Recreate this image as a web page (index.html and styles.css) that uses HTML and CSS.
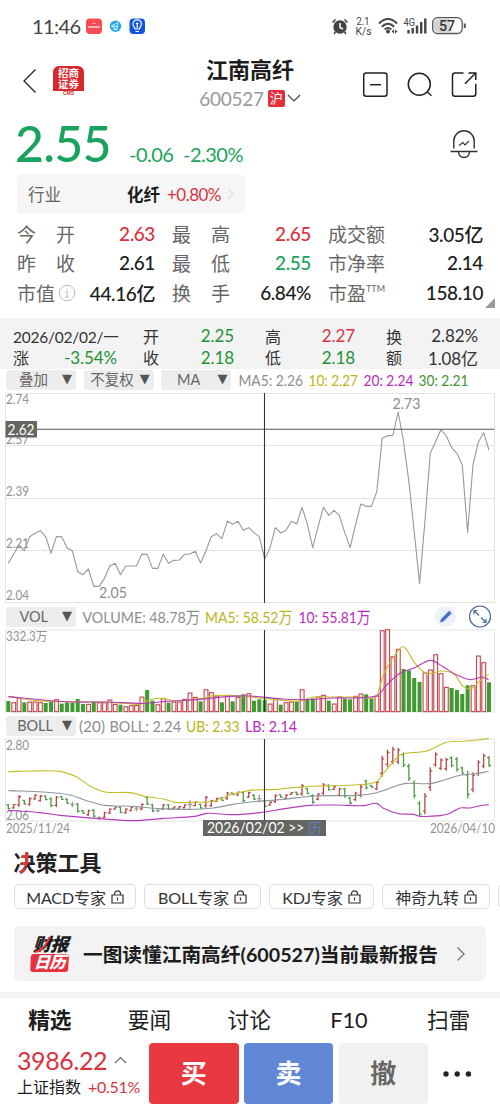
FILE: index.html
```html
<!DOCTYPE html>
<html lang="zh-CN">
<head>
<meta charset="utf-8">
<title>江南高纤 600527</title>
<link rel="stylesheet" href="styles.css">
</head>
<body>
<main class="app">
  <div class="status">
    <span class="clock">11:46</span>
    <svg class="status-apps" width="64" height="20" viewBox="84 17 64 20">
      <rect x="86" y="18.500" width="16" height="15.500" rx="4" fill="#fa4b55"/><path d="M88 27h12" stroke="#fff" stroke-width="1.300" stroke-dasharray="1.500 .4"/><path d="M92 23.500h4" stroke="#ff969b"/>
      <circle cx="115.500" cy="26.200" r="5.700" fill="#26a8e8"/><path d="M111.500 26l6.500-3.500-1 7-5.500-3.500 5.500.5M113 29l4 1" fill="none" stroke="#d8f4ff" stroke-width=".9"/>
      <rect x="129.500" y="18.500" width="15.500" height="15.500" rx="4" fill="#1055e0"/><path d="M135 29c0-2-2-2.500-2-5a4.200 4.200 0 0 1 8.400 0c0 2.500-2 3-2 5zM135.500 31.500h3.500M137.200 28v-4l-1.200-1m1.200 1l1.200-1" fill="none" stroke="#fff" stroke-width="1.200"/>
    </svg>
    <svg class="status-icons" width="140" height="24" viewBox="330 14 140 24">
      <circle cx="340" cy="27" r="6.700" fill="#444"/><path d="M332.500 22.500l3-3M347.500 22.500l-3-3M335.500 32l-1.500 2M344.500 32l1.500 2" stroke="#444" stroke-width="1.600"/><path d="M340 23v4.500l3 1.500" fill="none" stroke="#fff" stroke-width="1.500"/>
      <text x="356.500" y="25.300" textLength="13" class="tiny">2.1</text><text x="355.500" y="35" textLength="16" class="tiny">K/s</text>
      <path d="M379 23.500q9-9 18 0M381.800 26.700q6.200-6 12.400 0M384.700 29.500q3.300-3 6.600 0" fill="none" stroke="#444" stroke-width="1.900"/><circle cx="388" cy="31.500" r="2" fill="#444"/><path d="M391.500 31.500l2.500-2v4zM397.500 31.500l-2.500-2v4z" fill="#444"/>
      <text x="403.500" y="25.500" textLength="11.500" class="tiny">4G</text>
      <path d="M408.500 30v3.500M412.700 28v5.500M417 25.500v8M421.200 22v11.500M425.300 18.500v15" stroke="#444" stroke-width="2.400"/>
      <rect x="432.700" y="17.700" width="29.500" height="15.800" rx="4.800" fill="#fff" stroke="#555" stroke-width="1.300"/><path d="M438 19h12v13h-12a4 4 0 0 1-4-4v-5a4 4 0 0 1 4-4" fill="#d4d4d4"/><path d="M464.800 23.500v4.500" stroke="#555" stroke-width="2"/>
      <text x="439" y="31.300" textLength="16" class="battery">57</text>
    </svg>
  </div>

  <header class="header">
    <svg class="back" width="14" height="26" viewBox="0 0 14 26"><path d="M12.500 1.500L1 13l11.500 11.500" fill="none" stroke="#222" stroke-width="1.300"/></svg>
    <div class="broker"><b>招商<br>证券</b><i>CMS</i></div>
    <div class="title"><h1>江南高纤</h1><div class="code"><span>600527</span><b>沪</b><svg width="14" height="8" viewBox="0 0 14 8"><path d="M1 1l6 6 6-6" fill="none" stroke="#444" stroke-width="1.200"/></svg></div></div>
    <svg class="actions" width="116" height="28" viewBox="362 71 116 28" fill="none" stroke="#222" stroke-width="1.500">
      <rect x="363.700" y="73" width="23.300" height="23.300" rx="2.500"/><path d="M370 84.700h11"/>
      <circle cx="419.300" cy="84.300" r="11"/><path d="M427 91.700l4.500 4"/>
      <path d="M463.500 73h-8.500a2.500 2.500 0 0 0-2.500 2.500v18.300a2.500 2.500 0 0 0 2.500 2.500h18.300a2.500 2.500 0 0 0 2.500-2.500v-10M468.500 73h7.300v7M475.500 73.300l-10.500 10.500"/>
    </svg>
  </header>

  <section class="quote">
    <div class="price green"><strong>2.55</strong><span>-0.06</span><span>-2.30%</span>
      <svg class="bell" width="28" height="30" viewBox="0 0 28 30" fill="none" stroke="#333" stroke-width="1.400"><path d="M3.800 18.500v-7.500a10.200 10.200 0 0 1 20.400 0v7.500M.5 21.500h27M8.500 22a5.500 5.500 0 0 0 11 0"/><path d="M9 15.500l4-3 2 2.500 4-4" stroke-width="1.100"/></svg>
    </div>
    <div class="industry"><span>行业</span><b>化纤</b><em class="red">+0.80%</em><svg width="7" height="12" viewBox="0 0 7 12"><path d="M1 1l5 5-5 5" fill="none" stroke="#ddd" stroke-width="1.200"/></svg></div>
  </section>

  <section class="stats">
    <label><i>今</i><i>开</i></label><b class="red">2.63</b><label><i>最</i><i>高</i></label><b class="red">2.65</b><label>成交额</label><b>3.05亿</b>
    <label><i>昨</i><i>收</i></label><b>2.61</b><label><i>最</i><i>低</i></label><b class="green">2.55</b><label>市净率</label><b>2.14</b>
    <label>市值<svg width="18" height="18" viewBox="0 0 18 18" fill="none" stroke="#bbb"><circle cx="9" cy="9" r="7.800"/><path d="M7.500 7.500H9V13M7 13h4M9 4.200v1.500"/></svg></label><b>44.16亿</b><label><i>换</i><i>手</i></label><b>6.84%</b><label class="pe">市盈<sup>TTM</sup></label><b>158.10</b>
    <svg class="corner" width="10" height="10"><path d="M10 0v10H0z" fill="#999"/></svg>
  </section>

  <section class="day">
    <span class="date">2026/02/02/一</span><span class="k1">开</span><b class="dgreen">2.25</b><span class="k2">高</span><b class="red">2.27</b><span class="k2">换</span><b>2.82%</b>
    <span>涨</span><b class="dgreen">-3.54%</b><span class="k1">收</span><b class="dgreen">2.18</b><span class="k2">低</span><b class="dgreen">2.18</b><span class="k2">额</span><b>1.08亿</b>
  </section>

  <div class="toolbar top"><span class="pick">叠加<i>▼</i></span><span class="pick adj">不复权<i>▼</i></span><span class="pick ma">MA<i>▼</i></span>
    <svg class="legend ma-legend" width="240" height="20" viewBox="237 370 240 20"><text x="238.500" y="385.800" textLength="64.500">MA5: 2.26</text><text x="308.500" y="385.800" textLength="49.500" class="ub">10: 2.27</text><text x="363.500" y="385.800" textLength="50" class="lb">20: 2.24</text><text x="418.500" y="385.800" textLength="50" class="dg">30: 2.21</text></svg>
  </div>
  <svg id="price" class="chart" width="500" height="214" viewBox="0 391 500 214"></svg>
  <div class="toolbar"><span class="pick">VOL<i>▼</i></span>
    <svg class="legend vol" width="415" height="24" viewBox="80 605 415 24"><text x="82.500" y="622.500" textLength="117.500">VOLUME: 48.78万</text><text x="205" y="622.500" textLength="87.500" class="ub">MA5: 58.52万</text><text x="298.500" y="622.500" textLength="72" class="lb">10: 55.81万</text>
      <circle cx="445.500" cy="616.500" r="10.500" fill="#edf2fa"/><path d="M440 622.500l1-3.500 8.200-8.200 2.500 2.500-8.200 8.200z" fill="#4c6fc8"/><circle cx="480" cy="616.500" r="10.500" fill="none" stroke="#45698f" stroke-width="1.200"/><path d="M474 614v-3.500h3.500M474 610.500l5 5M486 619v3.500h-3.500M486 622.500l-5-5" fill="none" stroke="#45698f" stroke-width="1.200"/></svg>
  </div>
  <svg id="volume" class="chart" width="500" height="86" viewBox="0 629 500 86"></svg>
  <div class="toolbar boll"><span class="pick">BOLL<i>▼</i></span>
    <svg class="legend" width="300" height="20" viewBox="78 716 300 20"><text x="79" y="731.500" textLength="26">(20)</text><text x="109.500" y="731.500" textLength="71.500">BOLL: 2.24</text><text x="186" y="731.500" textLength="53.500" class="ub">UB: 2.33</text><text x="245" y="731.500" textLength="52" class="lb">LB: 2.14</text></svg>
  </div>
  <svg id="bands" class="chart" width="500" height="102" viewBox="0 737 500 102"></svg>

  <section class="tools">
    <svg class="tools-title" width="90" height="26" viewBox="14 850 90 26"><defs><clipPath id="accent"><path d="M21.500 850h7v13l-3 5-3 8h-6l2-8 3-4z"/></clipPath></defs><text x="13.500" y="870.500" textLength="88">决策工具</text><text x="13.500" y="870.500" textLength="88" clip-path="url(#accent)" class="accent" aria-hidden="true">决策工具</text></svg>
    <div class="chips">
      <span class="c1">MACD专家<svg class="lock"><use href="#lock"/></svg></span><span class="c2">BOLL专家<svg class="lock"><use href="#lock"/></svg></span><span class="c3">KDJ专家<svg class="lock"><use href="#lock"/></svg></span><span class="c4">神奇九转<svg class="lock"><use href="#lock"/></svg></span><span class="c5"></span>
    </div>
    <svg class="symbols"><symbol id="lock" viewBox="0 0 13 14"><path d="M1 5h11v8H1zM3.500 5V3.800a3 3 0 0 1 6 0V5M6.500 7.500v3" fill="none" stroke="#333" stroke-width="1.200"/></symbol></svg>
    <div class="banner"><div class="report"><b>财报</b><strong>日历</strong><svg width="20" height="20" viewBox="0 0 20 20"><path d="M1 16c5-1 9-5 11-9l3-6" fill="none" stroke="#e8323c" stroke-width="2.200"/></svg></div><p>一图读懂江南高纤(600527)当前最新报告</p><svg width="10" height="16" viewBox="0 0 10 16"><path d="M1.500 1.500L8 8l-6.500 6.500" fill="none" stroke="#777" stroke-width="1.400"/></svg></div>
  </section>

  <nav class="tabs"><b>精选</b><span>要闻</span><span>讨论</span><span>F10</span><span>扫雷</span></nav>
  <footer class="trade">
    <div class="index"><div class="points red">3986.22<svg width="13" height="8" viewBox="0 0 13 8"><path d="M1 7l5.500-5.500L12 7" fill="none" stroke="#666" stroke-width="1.100"/></svg></div><div class="index-name">上证指数<em class="red">+0.51%</em></div></div>
    <div class="btn buy">买</div><div class="btn sell">卖</div><div class="btn cancel">撤</div>
    <svg class="more" width="30" height="8" viewBox="0 0 30 8"><circle cx="4" cy="4" r="2.700"/><circle cx="15.200" cy="4" r="2.700"/><circle cx="26.400" cy="4" r="2.700"/></svg>
  </footer>
</main>
<script src="charts.js"></script>
</body>
</html>
```
FILE: charts.js
```js
const X0 = 8.3, STEP = 5.341;
const px = i => X0 + STEP * i;
const RED = '#c84a50', GREEN = '#3f9b2f', GRAY = '#999';

const line = (x1, y1, x2, y2, color = '#e4e4e4', w = 1) =>
  `<path d="M${x1} ${y1}L${x2} ${y2}" stroke="${color}" stroke-width="${w}" fill="none"/>`;
const poly = (pts, color) =>
  `<polyline points="${pts.map(p => p.join(',')).join(' ')}" fill="none" stroke="${color}" stroke-width="1.1" stroke-linejoin="round"/>`;
const label = (x, y, len, s, cls = 'axis') =>
  `<text x="${x}" y="${y}" textLength="${len}" class="${cls}">${s}</text>`;
const frame = (y, h) =>
  `<rect x="5.5" y="${y}" width="489" height="${h}" fill="none" stroke="#e4e4e4"/>`;

// smooth overlay through sparse control points
function curve(pts, color) {
  let d = `M${pts[0]}`;
  for (let i = 0; i < pts.length - 1; i++) {
    const a = pts[Math.max(0, i - 1)], b = pts[i], c = pts[i + 1], e = pts[Math.min(pts.length - 1, i + 2)];
    const t = (c[0] - b[0]) / 3;
    d += `C${b[0] + t} ${b[1] + (c[1] - a[1]) / (c[0] - a[0]) * t} ${c[0] - t} ${c[1] - (e[1] - b[1]) / (e[0] - b[0]) * t} ${c[0]} ${c[1]}`;
  }
  return `<path d="${d}" fill="none" stroke="${color}" stroke-width="1.1"/>`;
}

// closing price
const close = [535,507,480,497,455,445,437,455,505,455,455,488,498,560,569,552,604,604,580,543,535,569,543,543,543,508,508,550,550,508,535,526,525,508,507,499,534,498,455,446,461,409,418,409,436,428,443,455,522,488,428,444,436,409,417,367,418,488,425,367,391,376,392,443,488,420,357,364,364,320,160,152,151,81,170,290,440,596,410,205,170,134,152,188,205,240,442,240,172,143,195];
document.getElementById('price').innerHTML =
  frame(393.5, 209) + [445.5, 498.5, 550.5].map(y => line(6, y, 494, y)).join('') +
  label(6, 404, 23, '2.74') + label(6, 443.5, 23, '2.57') + label(6, 496, 23, '2.39') + label(6, 548, 23, '2.21') + label(6, 600, 23, '2.04') +
  poly(close.map((v, i) => [px(i), 385 + v / 3]), GRAY) +
  label(99, 598, 28, '2.05', 'peak') + label(392.5, 409, 28, '2.73', 'peak') +
  line(6, 429.3, 494.5, 429.3, '#54544e', 1.1) + line(264.5, 393, 264.5, 603, '#333', 1.1) +
  '<rect x="5.5" y="421" width="31.5" height="16.5" fill="#666660"/>' + label(7.5, 434.8, 27, '2.62', 'badge');

// volume
const vol = 'g288 r292 r278 g292 r290 r290 r292 g294 g290 r283 g296 g292 g293 g282 g297 r297 g290 r292 r292 r284 r297 g299 r304 r301 r300 r275 g255 g287 r298 r280 g293 r290 r290 r282 r263 r276 g289 r253 r262 r272 g292 r271 g289 r276 g268 r265 g287 g283 g285 r296 r280 g299 r292 r290 g290 r253 g282 g280 r275 r270 g287 r296 r275 g281 g283 r273 r266 g268 g282 r272 r76 r73 r154 r132 g192 g196 g219 g231 r203 r194 r148 r205 r246 g249 g255 g267 g241 r241 r152 r172 g232'.split(' ');
const toXY = (ox, oy) => ([x, y]) => [ox + x / 3, oy + y / 3];
document.getElementById('volume').innerHTML =
  frame(630, 82) + label(6, 640.5, 41.5, '332.3万') +
  vol.map((v, i) => {
    const y = 605 + (+v.slice(1)) / 3, h = 712 - y;
    return v[0] === 'g'
      ? `<rect x="${px(i) - 2}" y="${y}" width="4" height="${h}" fill="${GREEN}"/>`
      : `<rect x="${px(i) - 1.8}" y="${y + .4}" width="3.8" height="${h - .8}" fill="#fff" stroke="${RED}" stroke-width="1.15"/>`;
  }).join('') +
  curve([[25,274],[105,286],[185,290],[300,291],[390,296],[420,298],[450,284],[490,280],[525,288],[570,284],[610,279],[640,272],[690,271],[750,276],[850,286],[900,288],[940,276],[1000,276],[1080,276],[1130,273],[1150,210],[1185,150],[1211,125],[1245,175],[1280,206],[1325,198],[1362,207],[1390,245],[1418,249],[1440,228],[1466,208]].map(toXY(0, 605)), '#c2be27') +
  curve([[25,275],[130,285],[220,291],[320,291],[430,295],[500,289],[600,283],[690,274],[750,273],[850,282],[910,284],[1000,279],[1130,273],[1160,240],[1200,205],[1240,190],[1292,166],[1330,186],[1370,210],[1410,224],[1450,216],[1466,225]].map(toXY(0, 605)), '#b63bbc') +
  line(264.5, 630, 264.5, 712, '#333', 1.1);

// bollinger bands with high-low bars
const bars = 'g207-223 r207-221 r180-215 g194-209 r187-212 r178-194 r180-200 g181-196 g187-216 r182-216 g183-195 g190-207 n200-217 g203-233 g225-236 r224-242 g222-247 n242-255 r230-250 r220-237 r215-224 g214-235 r220-236 r215-229 n214-229 r205-225 g183-211 g206-231 n222-232 r207-225 g207-225 r215-221 r214-221 r208-220 n196-221 r199-214 g206-221 r182-218 r194-215 r188-201 g187-198 r171-194 g173-180 r170-182 g168-202 r170-189 g178-195 n180-202 g195-217 r200-212 r178-204 g178-188 r178-193 r172-179 g170-180 r147-182 g158-178 g178-206 r174-196 r144-180 g148-167 r153-165 r158-184 g158-188 g186-208 r170-198 r150-187 g134-163 g150-158 r138-166 r62-125 r45-95 r35-88 r38-87 g52-96 g86-138 g136-190 g198-244 r174-238 r97-168 r52-95 r70-105 r68-107 g64-97 g66-110 g95-118 g108-190 r112-172 r75-123 r56-100 g63-96'.split(' ');
document.getElementById('bands').innerHTML =
  frame(739, 82) + label(6, 750, 23, '2.80') + label(6, 820, 23, '2.06') +
  bars.map((s, i) => {
    const [hi, lo] = s.slice(1).split('-').map(v => 735 + v / 3), x = px(i);
    const c = { r: '#b94746', g: '#4c9b42', n: '#999' }[s[0]], m = (lo - hi) * .15;
    const [o, e] = s[0] === 'r' ? [lo - m, hi + m] : s[0] === 'g' ? [hi + m, lo - m] : [(hi + lo) / 2, (hi + lo) / 2];
    return `<path d="M${x} ${hi}V${lo}M${x - 2} ${o}H${x}M${x} ${e}H${x + 2}" stroke="${c}" stroke-width="1.3" fill="none"/>`;
  }).join('') +
  curve([[25,110],[100,108],[180,109],[230,126],[270,153],[315,171],[390,173],[440,185],[490,192],[525,202],[570,202],[640,199],[690,180],[750,166],[830,163],[890,157],[960,153],[1060,150],[1130,140],[1150,115],[1200,60],[1225,54],[1280,48],[1340,22],[1400,18],[1466,11]].map(toXY(0, 735)), '#c2be27') +
  curve([[25,167],[130,171],[210,180],[260,197],[315,211],[400,214],[480,221],[560,223],[640,219],[700,208],[750,201],[850,193],[940,183],[1070,181],[1130,173],[1190,152],[1220,145],[1290,146],[1330,136],[1380,121],[1430,116],[1466,109]].map(toXY(0, 735)), '#8f969b') +
  curve([[25,226],[120,233],[180,241],[300,251],[400,257],[490,250],[585,244],[620,235],[700,239],[780,233],[860,220],[930,211],[1010,210],[1090,212],[1130,205],[1150,220],[1195,236],[1240,238],[1260,244],[1320,242],[1350,235],[1380,219],[1410,219],[1440,212],[1466,209]].map(toXY(0, 735)), '#b63bbc') +
  line(264.5, 739, 264.5, 821, '#333', 1.1) +
  label(6, 832.5, 64, '2025/11/24') + label(430, 832.5, 65, '2026/04/10') +
  '<rect x="203" y="820" width="123" height="16" fill="#666660"/>' +
  label(207, 832.8, 97.5, '2026/02/02 &gt;&gt;', 'cursor') + label(307.5, 833.5, 14, '历', 'cursor blue');

// condense the glyphs together with their spacing
document.querySelectorAll('text[textLength]').forEach(t => t.setAttribute('lengthAdjust', 'spacingAndGlyphs'));
```
FILE: styles.css
```css
* { box-sizing: border-box; }
body, h1, p { margin: 0; }
i, em { font-style: normal; }
body { width: 500px; height: 1113px; overflow: hidden; background: #fff; color: #1c1c1c; font-family: Lato, "Noto Sans CJK SC", sans-serif; font-size: 16px; }
svg { display: block; flex: none; }
.app { width: 500px; }
.red { color: #d7343f; }
.green { color: #1aa35c; }
.dgreen { color: #219334; }

.status { height: 52px; display: flex; align-items: flex-start; padding-top: 14px; }
.clock { width: 84px; padding-left: 32px; font-size: 20px; line-height: 25px; letter-spacing: -.6px; color: #444; white-space: nowrap; }
.status-apps { margin-top: 3px; }
.status-icons { margin-left: 182px; }
.tiny { font: 10px Roboto, sans-serif; fill: #444; }
.battery { font: 500 14px Roboto, sans-serif; fill: #333; }

.header { height: 64px; display: flex; padding-left: 23px; }
.back { margin-top: 16px; }
.broker { width: 31px; height: 31px; margin: 14px 0 0 16px; text-align: center; }
.broker b { display: block; height: 25px; border-radius: 6px 6px 0 0; background: #d9272e; color: #fff; font-size: 10.5px; line-height: 11px; padding-top: 1.5px; }
.broker i { display: block; font: bold 5px/5px "Liberation Sans", sans-serif; color: #d9272e; }
.title { width: 144px; margin-left: 94px; display: flex; flex-direction: column; align-items: center; padding-top: 3px; }
.title h1 { font-size: 22px; line-height: 30px; }
.code { display: flex; align-items: center; margin-top: 2px; height: 22px; color: #999; font-size: 19px; }
.code span { letter-spacing: -.3px; }
.code b { margin: 0 2px 0 4px; width: 17px; height: 17px; border-radius: 2px; background: #e52d3b; color: #fff; font-size: 13px; font-weight: 400; line-height: 16px; text-align: center; }
.actions { margin: 19px 0 0 40px; }

.quote { height: 103px; padding: 0 17px; }
.price { height: 58px; display: flex; align-items: baseline; }
.price strong { width: 114px; font-size: 50px; line-height: 55px; font-weight: 500; letter-spacing: -.8px; margin-left: -2px; }
.price span { font-size: 20px; letter-spacing: -.5px; }
.price strong + span { width: 54px; }
.bell { margin-left: auto; align-self: flex-start; margin-top: 14px; margin-right: 5px; }
.industry { width: 228px; height: 40px; border-radius: 5px; background: #f6f6f6; display: flex; align-items: center; padding: 0 11px; font-size: 16.5px; }
.industry span { color: #666; }
.industry b { margin-left: auto; }
.industry em { margin: 0 6px 0 7px; font-size: 17px; letter-spacing: -.5px; }

.stats { height: 99px; padding: 0 17px; display: grid; grid-template-columns: 58px 80px 58px 81px 58px 97px; grid-auto-rows: 29.3px; align-items: center; position: relative; font-size: 19px; }
.stats label { display: flex; justify-content: space-between; color: #666; white-space: nowrap; }
.stats label:nth-of-type(3n+2) { margin-left: 17px; margin-right: -17px; }
.stats label:nth-of-type(3n) { margin-left: 34px; margin-right: -34px; }
.stats b { text-align: right; font-weight: 500; letter-spacing: -.4px; white-space: nowrap; }
.stats > b:nth-of-type(3n+2) { margin-right: -17px; }
.stats > b:nth-of-type(3n) { margin-right: -34px; }
.stats > label svg { margin: 5px 0 0 3px; }
.stats sup { font-size: 9px; line-height: 12px; margin-top: 4px; }
.stats .pe { justify-content: flex-start; }
.corner { position: absolute; right: 5px; top: 79px; }

.day { height: 51px; background: #f3f3f3; padding: 7px 22px 0 13px; display: grid; grid-template-columns: 28px 76px 42px 75px 47px 74px 49px 74px; grid-auto-rows: 21.5px; align-items: center; font-size: 16px; color: #333; }
.day .date { grid-column: span 2; font-size: 15.5px; letter-spacing: -.25px; white-space: nowrap; }
.day b { font-weight: 400; font-size: 17px; text-align: right; letter-spacing: -.1px; white-space: nowrap; }
.day .k1 { padding-left: 26px; }
.day .k2 { padding-left: 31px; }

.toolbar { height: 24px; padding: 2px 0 2px 6px; display: flex; gap: 7.7px; align-items: flex-start; }
.toolbar.top { height: 22px; padding-top: 1px; padding-bottom: 0; }
.toolbar.boll { height: 22px; padding-top: 1px; gap: 2px; }
.pick { width: 70px; height: 20px; border-radius: 3px; background: #ededed; color: #666; font-size: 14.5px; line-height: 19px; display: flex; justify-content: flex-end; flex: none; white-space: nowrap; }
.pick i { width: 18px; margin-left: 10px; text-align: center; font: 13px/17px "DejaVu Sans", sans-serif; color: #555; }
.pick.adj i { margin-left: 2px; }
.pick.ma i { margin-left: 13px; }
.boll .pick i { margin-left: 5px; }
.legend text { font-size: 16px; fill: #8d8d8d; }
.legend .ub { fill: #b9b519; }
.legend .lb { fill: #b62bbd; }
.legend .dg { fill: #3f9332; }
.ma-legend { margin-left: -2px; }
.vol { margin: -2px 0 0 -3.7px; }
.axis { font-size: 12.5px; fill: #929292; }
.peak { font-size: 14.5px; fill: #8d8d8d; }
.badge { font-size: 15px; fill: #fff; }
.cursor { font-size: 14.5px; fill: #fff; }
.cursor.blue { fill: #5b7fc8; }

.tools { height: 153px; padding-top: 11px; overflow: hidden; }
.tools-title { margin-left: 14px; }
.tools-title text { font-size: 22px; font-weight: 700; fill: #222; }
.tools-title .accent { fill: #e8323c; }
.chips { display: flex; padding-left: 14px; gap: 8px; margin-top: 8px; }
.chips > span { height: 25px; flex: none; border: 1px solid #ddd; border-radius: 5px; display: flex; align-items: center; justify-content: center; gap: 5px; font-size: 16px; letter-spacing: -.1px; color: #333; white-space: nowrap; }
.chips .c1 { width: 122px; }
.chips .c2 { width: 117px; }
.chips .c3 { width: 105px; }
.chips .c4 { width: 108px; }
.chips .c5 { width: 20px; }
.lock { width: 13px; height: 14px; }
.symbols { width: 0; height: 0; }
.banner { height: 55px; margin: 17px 14px 0; border-radius: 6px; background: #f3f3f3; display: flex; align-items: center; padding: 0 20px 0 17px; }
.report { position: relative; width: 38px; height: 36px; font-style: italic; text-align: center; transform: skewX(-3deg); }
.report b, .report strong { display: block; height: 18px; font-size: 18px; line-height: 17px; font-weight: 900; letter-spacing: -.5px; }
.report strong { background: #e8323c; color: #fff; border-radius: 3px; font-size: 16px; line-height: 16px; }
.report svg { position: absolute; left: 3px; top: 0; }
.banner p { margin-left: 14px; margin-right: auto; font-size: 19.7px; font-weight: 700; white-space: nowrap; }

.tabs { height: 46px; border-top: 6px solid #f3f3f3; display: grid; grid-template-columns: repeat(5, 99.7px); text-align: center; font-size: 21.7px; line-height: 44px; }
.trade { height: 75px; display: flex; align-items: flex-start; padding: 5px 0 0 17px; }
.index { width: 132px; }
.points { font-size: 25px; letter-spacing: -.4px; display: flex; align-items: center; gap: 7px; height: 34px; }
.index-name { font-size: 16px; line-height: 20px; display: flex; gap: 7px; white-space: nowrap; }
.index-name em { font-size: 16px; letter-spacing: -.3px; }
.btn { width: 89.5px; height: 61px; margin-right: 5.3px; border-radius: 4px; color: #fff; font-size: 26px; font-weight: 700; line-height: 61px; text-align: center; flex: none; }
.buy { background: #e93940; }
.sell { background: #5f87d6; }
.cancel { background: #f1f1f1; color: #666; }
.more { margin: 27px 0 0 9px; fill: #222; }
```
